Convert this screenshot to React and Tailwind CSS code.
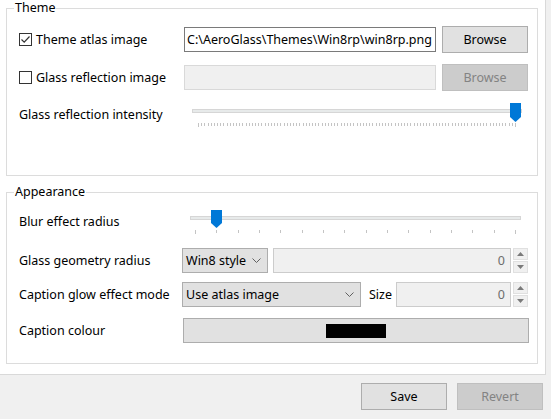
import React from 'react';

const font = { fontFamily: '"Noto Sans", "Open Sans", sans-serif' };

const Ticks = ({ count, width }) => {
    const step = (width - 1) / (count - 1);
    return (
        <svg width={width} height="4" className="block" shapeRendering="crispEdges">
            {Array.from({ length: count }).map((_, i) => {
                const x = Math.round(i * step) + 0.5;
                const long = i === 0 || i === count - 1;
                return <line key={i} x1={x} x2={x} y1="0" y2={long ? 4 : 3} stroke="#c4c4c4" strokeWidth="1" />;
            })}
        </svg>
    );
};

const Thumb = ({ h }) => (
    <svg width="11" height={h} className="block">
        <path d={`M0 0 H11 V${h - 5} L5.5 ${h} L0 ${h - 5} Z`} fill="#0078d7" />
    </svg>
);

const Slider = ({ width, tickLeft, tickWidth, ticks, thumbLeft, thumbH, trackTop }) => (
    <div className="relative h-[24px]" style={{ width }}>
        <div className="absolute left-0 right-0 h-[4px] bg-[#e7eaea] border border-[#d6d6d6]" style={{ top: trackTop }} />
        <div className="absolute top-0" style={{ left: thumbLeft }}>
            <Thumb h={thumbH} />
        </div>
        <div className="absolute top-[20px]" style={{ left: tickLeft }}>
            <Ticks count={ticks} width={tickWidth} />
        </div>
    </div>
);

const CheckBox = ({ checked }) => (
    <span className="w-[13px] h-[13px] border border-[#333333] bg-white flex items-center justify-center shrink-0">
        {checked && (
            <svg width="11" height="11" viewBox="0 0 11 11">
                <path d="M1.5 5.5 L4.2 8.2 L9.5 2.5" fill="none" stroke="#333333" strokeWidth="1.2" />
            </svg>
        )}
    </span>
);

const Button = ({ children, disabled, className = '' }) => (
    <button
        className={`h-[27px] w-[86px] border text-[12.5px] pt-px ${disabled ? 'bg-[#cccccc] border-[#bfbfbf] text-[#838383]' : 'bg-[#e1e1e1] border-[#adadad] text-black'} ${className}`}
    >
        {children}
    </button>
);

const Chevron = () => (
    <svg width="9" height="5" viewBox="0 0 9 5" className="block">
        <path d="M0.5 0.5 L4.5 4.5 L8.5 0.5" fill="none" stroke="#606060" strokeWidth="1" />
    </svg>
);

const Combo = ({ value, width }) => (
    <div className="h-[25px] bg-[#e1e1e1] border border-[#adadad] flex items-center justify-between pl-[3px] pr-[6px] shrink-0" style={{ width }}>
        <span className="text-[12.5px] text-black pt-px">{value}</span>
        <Chevron />
    </div>
);

const Spin = ({ width }) => (
    <div className="flex items-center gap-[2px] shrink-0">
        <div className="h-[25px] bg-[#f0f0f0] border border-[#cccccc] flex items-center justify-end pr-[5px] pt-px text-[12.5px] text-[#6d6d6d]" style={{ width }}>
            0
        </div>
        <div className="flex flex-col w-[15px] h-[25px] gap-px">
            <div className="flex-1 bg-[#f0f0f0] border border-[#e0e0e0] flex items-center justify-center">
                <svg width="7" height="4" viewBox="0 0 7 4"><path d="M0 4 L3.5 0 L7 4 Z" fill="#7a7a7a" /></svg>
            </div>
            <div className="flex-1 bg-[#f0f0f0] border border-[#e0e0e0] flex items-center justify-center">
                <svg width="7" height="4" viewBox="0 0 7 4"><path d="M0 0 L3.5 4 L7 0 Z" fill="#7a7a7a" /></svg>
            </div>
        </div>
    </div>
);

const Group = ({ title, height, children }) => (
    <fieldset className="ml-[6px] w-[532px] border border-[#dcdcdc]" style={{ height }}>
        <legend className="ml-[7px] px-[1px] text-[12.5px] leading-[16px] text-black">{title}</legend>
        {children}
    </fieldset>
);

export default function App() {
    return (
        <div className="w-[551px] h-[419px] bg-[#f0f0f0] overflow-hidden text-black text-[12.5px]" style={font}>
            <div className="w-[546px] h-[375px] bg-white border-r border-b border-[#d9d9d9]">
                <Group title="Theme" height={176}>
                    <div className="pt-[10px] pl-[12px] flex flex-col">
                        <div className="h-[27px] flex items-center">
                            <label className="w-[165px] flex items-center gap-[4px]">
                                <CheckBox checked />
                                <span className="pt-[2px]">Theme atlas image</span>
                            </label>
                            <div className="w-[252px] h-[25px] border border-[#7a7a7a] bg-white flex items-center pl-[2px] pt-px whitespace-nowrap overflow-hidden">
                                C:\AeroGlass\Themes\Win8rp\win8rp.png
                            </div>
                            <Button className="ml-[6px]">Browse</Button>
                        </div>
                        <div className="h-[27px] mt-[11px] flex items-center">
                            <label className="w-[165px] flex items-center gap-[4px]">
                                <CheckBox />
                                <span className="pt-[2px]">Glass reflection image</span>
                            </label>
                            <div className="w-[252px] h-[25px] border border-[#d9d9d9] bg-[#f0f0f0]" />
                            <Button disabled className="ml-[6px]">Browse</Button>
                        </div>
                        <div className="h-[24px] mt-[12px] flex items-start">
                            <span className="w-[173px] leading-[16px] mt-[4px]">Glass reflection intensity</span>
                            <Slider width={330} trackTop={6} tickLeft={6} tickWidth={318} ticks={101} thumbLeft={318} thumbH={19} />
                        </div>
                    </div>
                </Group>
                <div className="mt-[8px]">
                    <Group title="Appearance" height={180}>
                        <div className="pt-[10px] pl-[12px] flex flex-col">
                            <div className="h-[24px] flex items-start">
                                <span className="w-[171px] leading-[16px] mt-[4px]">Blur effect radius</span>
                                <Slider width={331} trackTop={6} tickLeft={5} tickWidth={321} ticks={16} thumbLeft={21} thumbH={18} />
                            </div>
                            <div className="h-[25px] mt-[14px] flex items-center">
                                <span className="w-[163px] pt-[2px]">Glass geometry radius</span>
                                <Combo value="Win8 style" width={86} />
                                <div className="ml-[5px]">
                                    <Spin width={238} />
                                </div>
                            </div>
                            <div className="h-[25px] mt-[9px] flex items-center">
                                <span className="w-[163px] pt-[2px]">Caption glow effect mode</span>
                                <Combo value="Use atlas image" width={179} />
                                <span className="ml-[8px] w-[27px] pt-[2px]">Size</span>
                                <Spin width={115} />
                            </div>
                            <div className="h-[25px] mt-[11px] flex items-center">
                                <span className="w-[164px] pt-[2px]">Caption colour</span>
                                <div className="w-[346px] h-[25px] bg-[#e1e1e1] border border-[#adadad] flex items-center justify-center">
                                    <div className="w-[60px] h-[14px] bg-black" />
                                </div>
                            </div>
                        </div>
                    </Group>
                </div>
            </div>
            <div className="flex justify-end gap-[10px] pt-[8px] pr-[8px]">
                <Button>Save</Button>
                <Button disabled>Revert</Button>
            </div>
        </div>
    );
}
